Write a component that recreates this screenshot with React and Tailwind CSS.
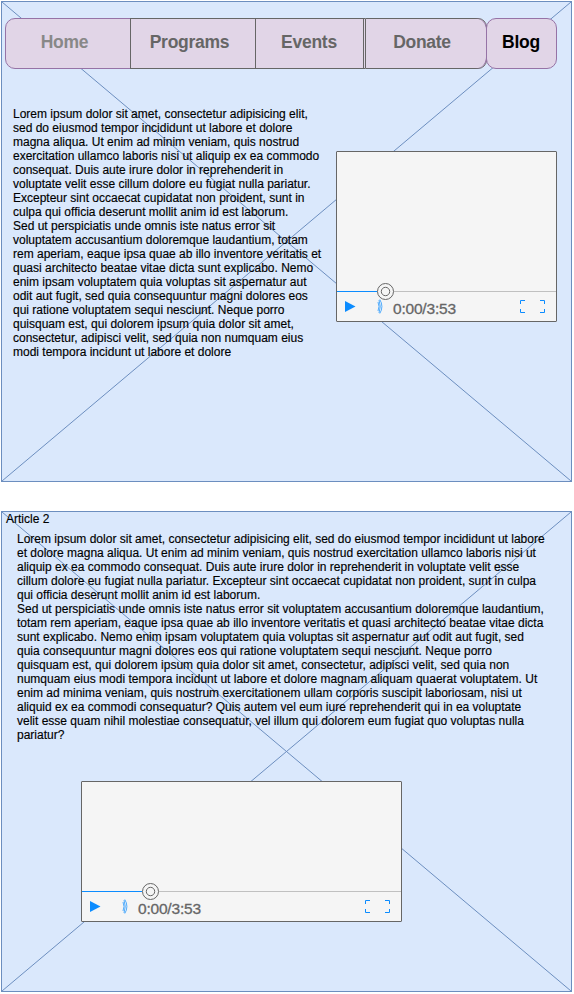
const introLines = [
  'Lorem ipsum dolor sit amet, consectetur adipisicing elit,',
  'sed do eiusmod tempor incididunt ut labore et dolore',
  'magna aliqua. Ut enim ad minim veniam, quis nostrud',
  'exercitation ullamco laboris nisi ut aliquip ex ea commodo',
  'consequat. Duis aute irure dolor in reprehenderit in',
  'voluptate velit esse cillum dolore eu fugiat nulla pariatur.',
  'Excepteur sint occaecat cupidatat non proident, sunt in',
  'culpa qui officia deserunt mollit anim id est laborum.',
  'Sed ut perspiciatis unde omnis iste natus error sit',
  'voluptatem accusantium doloremque laudantium, totam',
  'rem aperiam, eaque ipsa quae ab illo inventore veritatis et',
  'quasi architecto beatae vitae dicta sunt explicabo. Nemo',
  'enim ipsam voluptatem quia voluptas sit aspernatur aut',
  'odit aut fugit, sed quia consequuntur magni dolores eos',
  'qui ratione voluptatem sequi nesciunt. Neque porro',
  'quisquam est, qui dolorem ipsum quia dolor sit amet,',
  'consectetur, adipisci velit, sed quia non numquam eius',
  'modi tempora incidunt ut labore et dolore',
];

const articleLines = [
  'Lorem ipsum dolor sit amet, consectetur adipisicing elit, sed do eiusmod tempor incididunt ut labore',
  'et dolore magna aliqua. Ut enim ad minim veniam, quis nostrud exercitation ullamco laboris nisi ut',
  'aliquip ex ea commodo consequat. Duis aute irure dolor in reprehenderit in voluptate velit esse',
  'cillum dolore eu fugiat nulla pariatur. Excepteur sint occaecat cupidatat non proident, sunt in culpa',
  'qui officia deserunt mollit anim id est laborum.',
  'Sed ut perspiciatis unde omnis iste natus error sit voluptatem accusantium doloremque laudantium,',
  'totam rem aperiam, eaque ipsa quae ab illo inventore veritatis et quasi architecto beatae vitae dicta',
  'sunt explicabo. Nemo enim ipsam voluptatem quia voluptas sit aspernatur aut odit aut fugit, sed',
  'quia consequuntur magni dolores eos qui ratione voluptatem sequi nesciunt. Neque porro',
  'quisquam est, qui dolorem ipsum quia dolor sit amet, consectetur, adipisci velit, sed quia non',
  'numquam eius modi tempora incidunt ut labore et dolore magnam aliquam quaerat voluptatem. Ut',
  'enim ad minima veniam, quis nostrum exercitationem ullam corporis suscipit laboriosam, nisi ut',
  'aliquid ex ea commodi consequatur? Quis autem vel eum iure reprehenderit qui in ea voluptate',
  'velit esse quam nihil molestiae consequatur, vel illum qui dolorem eum fugiat quo voluptas nulla',
  'pariatur?',
];

function Panel({ children }) {
  return (
    <section className="relative isolate h-[481px] w-[571px] border border-[#6c8ebf] bg-[#dae8fc]">
      <svg className="absolute inset-0 -z-10 h-full w-full" viewBox="0 0 569 479" stroke="#6c8ebf" fill="none">
        <path d="M0 0L569 479M569 0L0 479" />
      </svg>
      {children}
    </section>
  );
}

function Lines({ lines }) {
  return (
    <div className="text-[12px] leading-[14px] whitespace-nowrap text-black [-webkit-text-stroke:0.15px_#000]">
      {lines.map((line) => (
        <p key={line}>{line}</p>
      ))}
    </div>
  );
}

function Video({ className, filled }) {
  return (
    <div className={`flex flex-col rounded-[1px] border border-[#666666] bg-[#f5f5f5] ${className}`}>
      <div className="flex-1" />
      <div className="flex h-px items-center bg-[#c0c0c0]">
        <div className={`h-px bg-[#0c8cff] ${filled}`} />
        <svg className="h-[17px] w-[17px] shrink-0" viewBox="0 0 17 17" fill="#f5f5f5" stroke="#666666">
          <circle cx="8.5" cy="8.5" r="8" />
          <circle cx="8.5" cy="8.5" r="4.2" />
        </svg>
      </div>
      <div className="flex h-[29px] items-start pl-2 pr-[11px]">
        <svg className="mt-[9px] h-[12px] w-[11px]" viewBox="0 0 11 12" fill="#0c8cff">
          <path d="M0 0L10.5 5.5L0 11Z" />
        </svg>
        <svg className="ml-[21px] mt-[7px] h-[15px] w-[6px]" viewBox="0 0 6 15" fill="none" stroke="#0c8cff" strokeWidth="0.7">
          <path d="M1 3Q3 7.5 1 12M2 1Q4.5 7.5 2 14M2.8 0.5Q7 7.5 2.8 14.5" />
        </svg>
        <span className="ml-[10px] mt-[8px] text-[15.5px] leading-[18px] tracking-[-0.2px] text-[#666666] [-webkit-text-stroke:0.3px_#666666]">0:00/3:53</span>
        <svg className="ml-auto mt-[8px] h-[13px] w-[25px]" viewBox="0 0 25 13" fill="none" stroke="#0c8cff">
          <path d="M5 .5H.5V4M20 .5H24.5V4M5 12.5H.5V9M20 12.5H24.5V9" />
        </svg>
      </div>
    </div>
  );
}

function NavItem({ className, children }) {
  return (
    <a className={`flex h-[51px] shrink-0 items-center justify-center border bg-[#e1d5e7] pb-[3px] text-[17.5px] font-bold tracking-[-0.27px] ${className}`}>
      {children}
    </a>
  );
}

export default function App() {
  return (
    <main className="flex h-[994px] w-[574px] flex-col gap-[29px] overflow-hidden bg-white pl-px pt-px font-['Liberation_Sans',Arial,sans-serif]">
      <Panel>
        <nav className="ml-[3px] mt-4 flex">
          <NavItem className="w-[126px] rounded-l-[10px] border-[#9673a6] pr-[7px] text-[#888888]">Home</NavItem>
          <NavItem className="-ml-px w-[126px] border-[#666666] pr-[7px] text-[#666666]">Programs</NavItem>
          <NavItem className="-ml-px w-[109px] border-[#666666] pr-px text-[#666666]">Events</NavItem>
          <div className="h-[51px] w-px border-y border-[#666666] bg-[#e1d5e7]" />
          <div className="relative">
            <NavItem className="w-[122px] rounded-r-[9px] border-[#666666] pr-[8px] text-[#666666]">Donate</NavItem>
            <span className="absolute inset-y-0 right-0 w-4 rounded-r-[12px] border-r border-[#9673a6]" />
          </div>
          <NavItem className="relative -ml-px w-[71px] rounded-[10px] border-[#9673a6] pr-px text-black">Blog</NavItem>
        </nav>
        <div className="mt-[38px] flex pl-[11px]">
          <div className="w-[323px]">
            <Lines lines={introLines} />
          </div>
          <Video className="mt-11 h-[171px] w-[221px]" filled="w-[40px]" />
        </div>
      </Panel>
      <Panel>
        <h2 className="pl-1 text-[12px] leading-[14px] text-black [-webkit-text-stroke:0.15px_#000]">Article 2</h2>
        <div className="mt-[6px] pl-[15px]">
          <Lines lines={articleLines} />
        </div>
        <Video className="ml-[79px] mt-[39px] h-[141px] w-[321px]" filled="w-[60px]" />
      </Panel>
    </main>
  );
}
